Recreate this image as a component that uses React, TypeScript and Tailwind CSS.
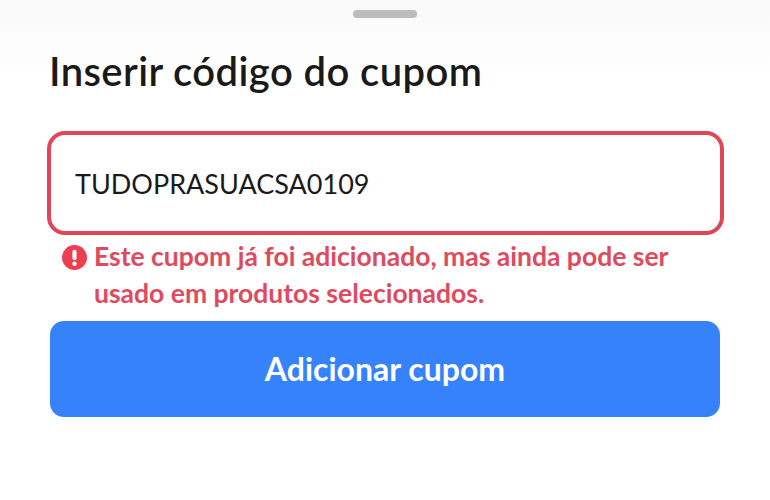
const FONT = "font-['Lato','Noto_Sans',sans-serif]";

function AlertIcon() {
  return (
    <svg viewBox="0 0 24 24" className="w-[25px] h-[25px] shrink-0">
      <circle cx="12" cy="12" r="12" fill="#ee3d4f" />
      <rect x="10" y="4.6" width="4" height="10" rx="2" fill="#fff" />
      <circle cx="12" cy="18" r="2.1" fill="#fff" />
    </svg>
  );
}

export default function App() {
  return (
    <div className={`w-[770px] h-[500px] overflow-hidden bg-white ${FONT}`}>
      <div className="h-[80px] bg-gradient-to-b from-[#f9f9f9] to-white flex justify-center pt-[10px]">
        <div className="w-[64px] h-[8px] ml-[-1px] rounded-full bg-[#bcbcbc]" />
      </div>
      <div className="px-[50px]">
        <h1 className="text-[40px] leading-[46px] mt-[-32px] ml-[-1px] font-semibold tracking-[0.4px] text-[#1a1a1a]">
          Inserir código do cupom
        </h1>
        <div className="mt-[37px] ml-[-3px] w-[677px] h-[104px] border-4 border-[#e04558] rounded-[18px] flex items-center pl-[24px] pt-[2px] text-[27px] text-[#1a1a1a]">
          TUDOPRASUACSA0109
        </div>
        <div className="flex gap-[7px] ml-[12px] mt-[10px]">
          <AlertIcon />
          <p className="text-[26.5px] leading-[37px] font-bold text-[#de4a5e] mt-[-7px] mb-[1px]">
            Este cupom já foi adicionado, mas ainda pode ser
            <br />
            usado em produtos selecionados.
          </p>
        </div>
        <button className="mt-[8px] w-[670px] h-[96px] rounded-[14px] bg-[#3582fa] text-white text-[32px] font-bold">
          Adicionar cupom
        </button>
      </div>
    </div>
  );
}
